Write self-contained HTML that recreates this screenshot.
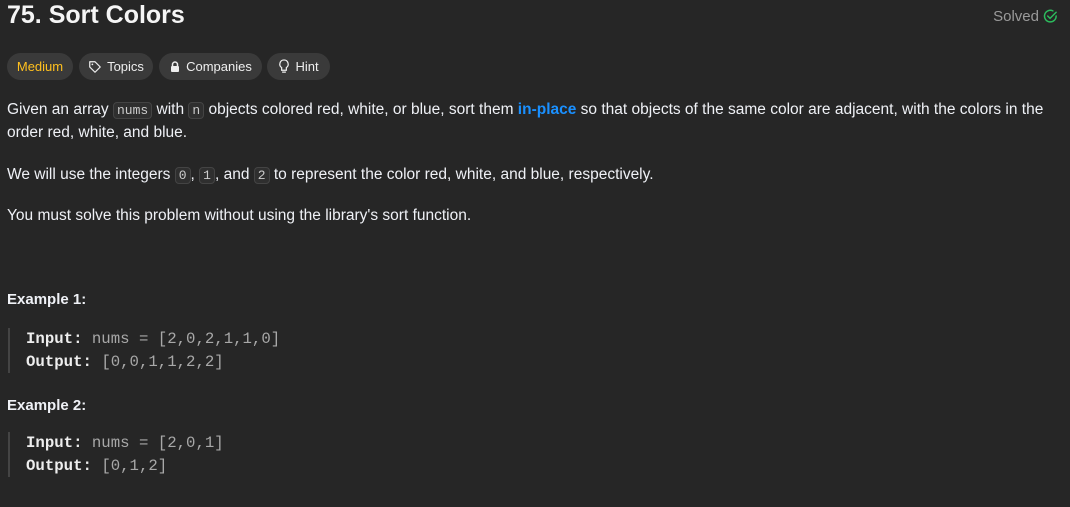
<!DOCTYPE html>
<html><head><meta charset="utf-8"><style>
body{margin:0;background:#262626;width:1070px;height:507px;overflow:hidden;font-family:"Liberation Sans",sans-serif;color:#eff1f6;}
.t{position:absolute;left:7px;top:1px;font-size:25px;font-weight:bold;color:#f5f5f5;}
.s{position:absolute;right:12px;top:8px;font-size:15px;color:#9a9a9a;display:flex;align-items:center;gap:4px}
.pill{position:absolute;top:53px;height:27px;border-radius:14px;background:#3a3a3a;font-size:13px;display:flex;align-items:center;justify-content:center;gap:5px;color:#eee}
p{position:absolute;left:7px;margin:0;font-size:15.5px;line-height:22px;width:1058px}
code{font-family:"Liberation Mono",monospace;font-size:13px;background:#2f2f2f;border:1px solid #444;border-radius:4px;padding:0 3px;color:#ccc}
.h{position:absolute;left:7px;font-size:15px;font-weight:bold}
.ex{position:absolute;left:8px;border-left:2px solid #444;padding-left:16px;font-family:"Liberation Mono",monospace;font-size:15.7px;line-height:22.5px;color:#a8a8a8}
.ex b{color:#eee}
</style></head><body>
<div class="t">75. Sort Colors</div>
<div class="s">Solved <svg width="15" height="15" viewBox="0 0 16 16"><path d="M14 7.5A6.2 6.2 0 1 1 10.5 2" fill="none" stroke="#2cbb5d" stroke-width="1.6" stroke-linecap="round"/><path d="M5 7.5l2.5 2.5L14 3.5" fill="none" stroke="#2cbb5d" stroke-width="1.6" stroke-linecap="round"/></svg></div>
<div class="pill" style="left:7px;width:66px;color:#ffc01e">Medium</div>
<div class="pill" style="left:79px;width:74px"><svg width="14" height="14" viewBox="0 0 16 16"><path d="M2 2h6l6 6-6 6-6-6z" fill="none" stroke="#eee" stroke-width="1.4" stroke-linejoin="round"/><circle cx="5" cy="5" r="1" fill="#eee"/></svg>Topics</div>
<div class="pill" style="left:159px;width:103px"><svg width="12" height="12" viewBox="0 0 12 12"><path d="M3.5 5V3.5a2.5 2.5 0 0 1 5 0V5" fill="none" stroke="#eee" stroke-width="1.5"/><rect x="2" y="5" width="8" height="6" rx="1" fill="#eee"/></svg>Companies</div>
<div class="pill" style="left:267px;width:63px"><svg width="12" height="15" viewBox="0 0 12 16"><path d="M6 1a4.5 4.5 0 0 0-2.5 8.2V12h5V9.2A4.5 4.5 0 0 0 6 1zM4 14h4" fill="none" stroke="#eee" stroke-width="1.3"/></svg>Hint</div>
<p style="top:99px">Given an array <code>nums</code> with <code>n</code> objects colored red, white, or blue, sort them <b style="color:#1a90ff">in-place</b> so that objects of the same color are adjacent, with the colors in the order red, white, and blue.</p>
<p style="top:164px">We will use the integers <code>0</code>, <code>1</code>, and <code>2</code> to represent the color red, white, and blue, respectively.</p>
<p style="top:205px">You must solve this problem without using the library's sort function.</p>
<div class="h" style="top:291px">Example 1:</div>
<div class="ex" style="top:328px"><b>Input:</b> nums = [2,0,2,1,1,0]<br><b>Output:</b> [0,0,1,1,2,2]</div>
<div class="h" style="top:397px">Example 2:</div>
<div class="ex" style="top:432px"><b>Input:</b> nums = [2,0,1]<br><b>Output:</b> [0,1,2]</div>
</body></html>
